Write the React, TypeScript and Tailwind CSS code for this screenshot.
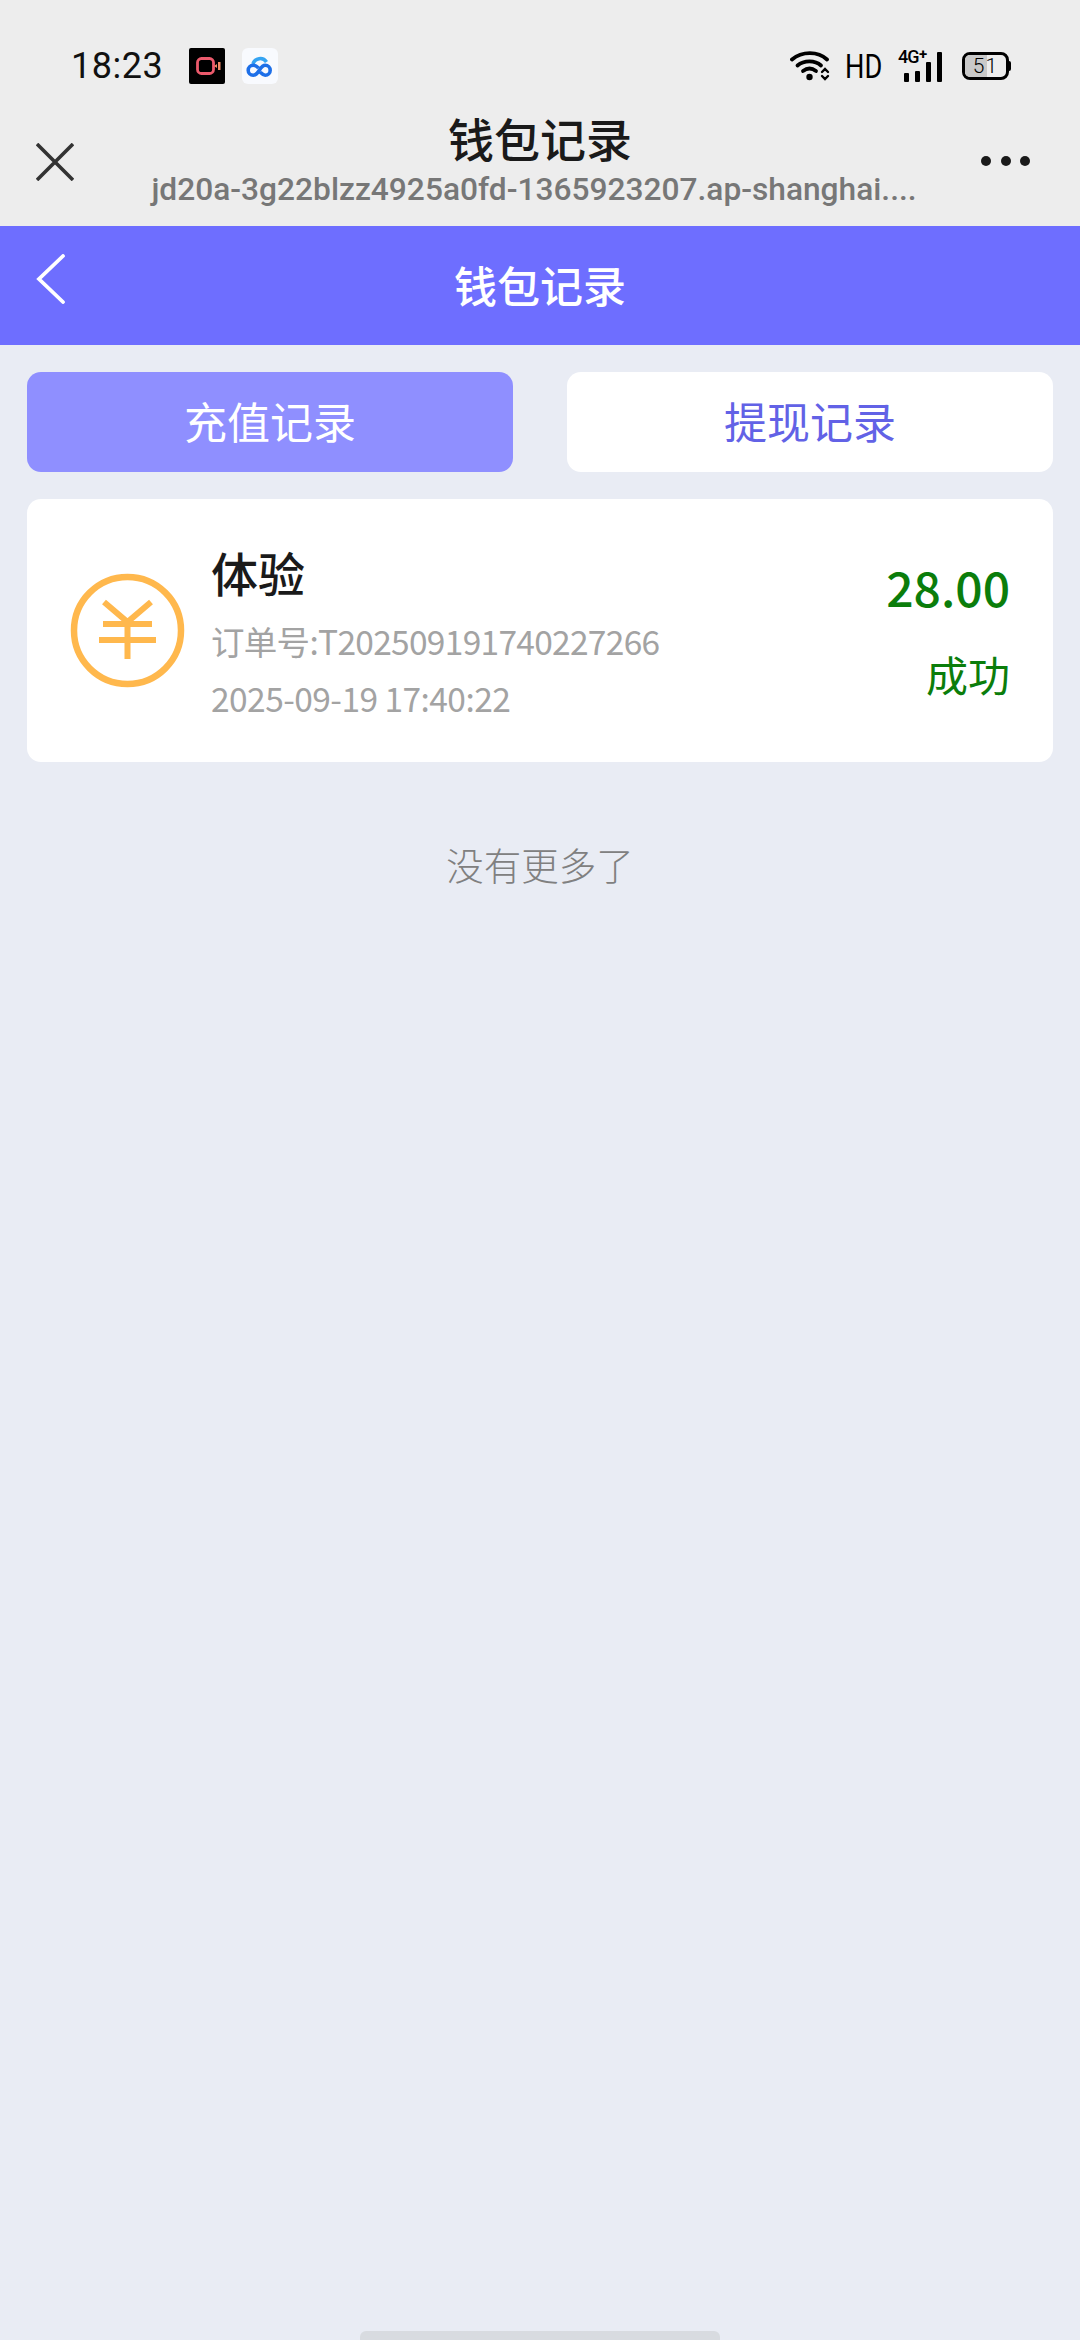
export default function App() {
  const cjk = "font-['Noto_Sans_CJK_SC',sans-serif]";
  return (
    <div className={`relative flex h-[2340px] w-[1080px] flex-col overflow-hidden bg-[#e9ecf4] ${cjk}`}>
      <div className="flex h-[226px] flex-col bg-[#ededed]">
        <div className="flex h-[66px] items-start pl-[71px] pr-[69px] pt-[48px]">
          <span className="w-[118px] font-['Roboto',sans-serif] text-[36px] leading-[36px] tracking-[0.5px] text-[#111]">18:23</span>
          <svg width="36" height="36" viewBox="0 0 36 36" className="rounded-[2px]">
            <rect width="36" height="36" fill="#000" />
            <rect x="8.500" y="10.500" width="16" height="15" rx="4" fill="none" stroke="#ec5a6c" strokeWidth="2.800" />
            <path d="M25 18l3-2v4zM29 14h2.500v8H29z" fill="#f08a66" />
          </svg>
          <svg width="36" height="36" viewBox="0 0 36 36" className="ml-[17px] rounded-[6px]">
            <rect width="36" height="36" fill="#f8fafe" />
            <path d="M11 16a7.500 7.500 0 0 1 13.500-2" fill="none" stroke="#35a4f2" strokeWidth="3.600" />
            <path d="M16.500 20c-1.500-1.500-3-2.800-5.300-2.800a5 5 0 0 0 0 10c2.800 0 4.500-2.500 6-4.800s3-5.200 6-5.200a5 5 0 0 1 0 10c-2.200 0-3.500-1.500-5-3" fill="none" stroke="#1d6fe8" strokeWidth="3.600" />
          </svg>
          <div className="ml-auto flex h-[36px] items-center text-black">
            <svg width="42" height="32" viewBox="0 0 42 32" fill="none" stroke="#000" strokeLinecap="round">
              <path d="M2 9.500C12 1 28 1 37 9.500" strokeWidth="3.800" />
              <path d="M7.500 15.500C14 10 25 10 31 15.500" strokeWidth="3.800" />
              <path d="M13 21c4-3 9-3 13 0" strokeWidth="3.800" />
              <circle cx="19.500" cy="27" r="3.200" fill="#000" stroke="none" />
              <path d="M32 22l3-3 3 3M32 26l3 3 3-3" strokeWidth="2.400" />
            </svg>
            <span className="ml-[13px] w-[37px] origin-left scale-x-[0.8] font-['Roboto',sans-serif] text-[34px] leading-[36px]">HD</span>
            <div className="relative ml-[16px] h-[32px] w-[45px]">
              <span className="absolute left-0 top-[-3px] font-['Roboto',sans-serif] text-[18px] font-medium leading-[20px] tracking-[-1px]">4G</span>
              <span className="absolute left-[21px] top-[-3px] font-['Roboto',sans-serif] text-[15px] font-bold leading-[14px]">+</span>
              <div className="absolute bottom-0 left-[6px] flex items-end gap-[6px]">
                <div className="h-[9px] w-[5px] rounded-[1px] bg-black" />
                <div className="h-[11px] w-[5px] rounded-[1px] bg-black" />
                <div className="h-[20px] w-[5px] rounded-[1px] bg-black" />
                <div className="h-[30px] w-[5px] rounded-[1px] bg-black" />
              </div>
            </div>
            <div className="ml-[19px] flex items-center">
              <div className="relative flex h-[28px] w-[47px] items-center justify-center overflow-hidden rounded-[8px] border-[3px] border-black">
                <div className="absolute inset-y-0 left-0 w-[22px] bg-[#c9c9c9]" />
                <span className="relative font-['Roboto',sans-serif] text-[21px] font-light leading-[22px] tracking-[1px]">51</span>
              </div>
              <div className="h-[10px] w-[2px] rounded-r-[2px] bg-black" />
            </div>
          </div>
        </div>
        <div className="relative flex flex-1 flex-col items-center">
          <svg width="38" height="38" viewBox="0 0 38 38" className="absolute left-[36px] top-[77px]" fill="none" stroke="#333" strokeWidth="3.600">
            <path d="M1 1l36 36M37 1L1 37" />
          </svg>
          <div className="mt-[46px] text-[46px] font-medium leading-[50px] text-[#1a1a1a]">钱包记录</div>
          <div className="mt-[8px] w-[800px] truncate pr-[12px] text-center font-['Roboto',sans-serif] text-[31.700px] font-medium leading-[40px] text-[#777]">
            jd20a-3g22blzz4925a0fd-1365923207.ap-shanghai....
          </div>
          <div className="absolute left-[981px] top-[90px] flex gap-[9.500px]">
            <div className="h-[10px] w-[10px] rounded-full bg-[#1a1a1a]" />
            <div className="h-[10px] w-[10px] rounded-full bg-[#1a1a1a]" />
            <div className="h-[10px] w-[10px] rounded-full bg-[#1a1a1a]" />
          </div>
        </div>
      </div>

      <div className="relative flex h-[119px] items-center justify-center bg-[#6e6eff] pb-[3px]">
        <svg width="30" height="50" viewBox="0 0 30 50" className="absolute left-[36px] top-[28px]" fill="none" stroke="#fff" strokeWidth="3.800" strokeLinecap="round">
          <path d="M27 2L3 25l24 23" />
        </svg>
        <span className="text-[43px] font-medium leading-[60px] text-white">钱包记录</span>
      </div>

      <div className="flex gap-[54px] px-[27px] pt-[27px]">
        <div className="flex h-[100px] flex-1 items-center justify-center rounded-[14px] bg-[#8f8fff] pb-[3px] text-[43px] text-white">充值记录</div>
        <div className="flex h-[100px] flex-1 items-center justify-center rounded-[14px] bg-white pb-[3px] text-[43px] text-[#6262e6]">提现记录</div>
      </div>

      <div className="mx-[27px] mt-[27px] flex h-[263px] rounded-[14px] bg-white">
        <div className="ml-[43px] mt-[74px] h-[115px] w-[115px]">
          <svg width="115" height="115" viewBox="0 0 115 115" fill="none" stroke="#ffb84d" strokeWidth="6.500">
            <circle cx="57.500" cy="57.500" r="53.500" />
            <path d="M34 29l23.500 20L81 29" strokeWidth="6" />
            <path d="M33 51h49M29 67h57M57.500 47v39" strokeWidth="6" />
          </svg>
        </div>
        <div className="ml-[26px] flex flex-col">
          <div className="mt-[39px] text-[47px] font-medium leading-[68px] text-[#1a1a1a]">体验</div>
          <div className="mt-[13px] text-[33.500px] leading-[44px] tracking-[-0.7px] text-[#a3a3a3]">订单号:T202509191740227266</div>
          <div className="mt-[13px] text-[33.500px] leading-[44px] tracking-[-0.55px] text-[#a3a3a3]">2025-09-19 17:40:22</div>
        </div>
        <div className="ml-auto mr-[43px] flex flex-col items-end">
          <div className="mt-[57px] text-[48px] font-medium leading-[60px] text-[#0b7d0b]">28.00</div>
          <div className="mt-[27px] text-[42px] leading-[62px] text-[#0b7d0b]">成功</div>
        </div>
      </div>

      <div className="mt-[75px] text-center text-[37.500px] font-light leading-[54px] text-[#808080]">没有更多了</div>

      <div className="absolute bottom-0 left-[360px] h-[9px] w-[360px] rounded-t-[6px] bg-[#d8dbe0]" />
    </div>
  );
}
